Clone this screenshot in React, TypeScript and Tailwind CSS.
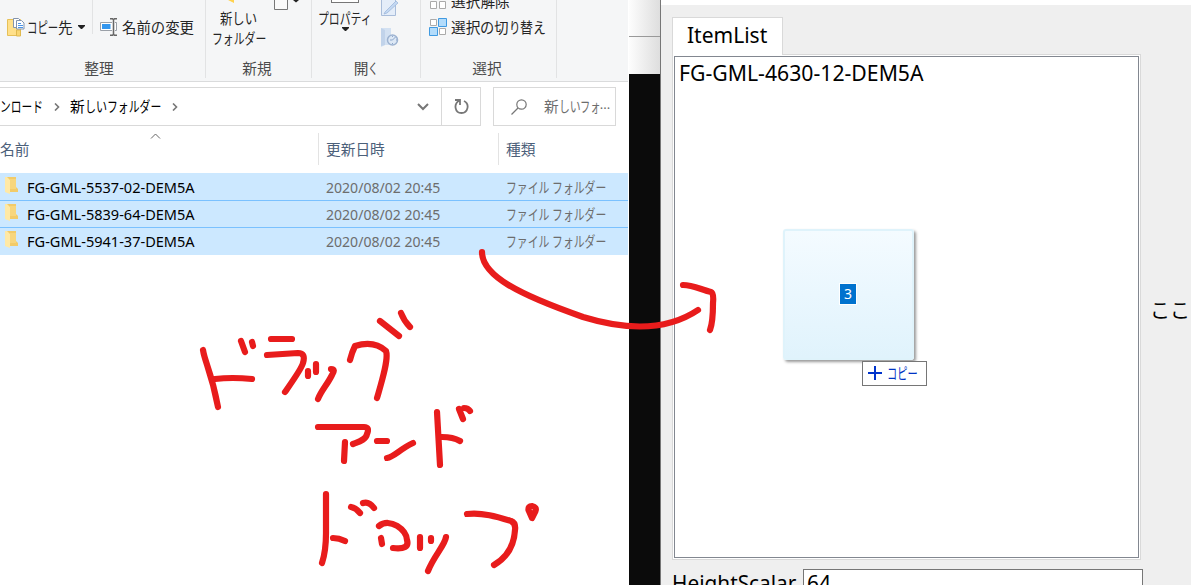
import React from 'react';

const files = ['FG-GML-5537-02-DEM5A', 'FG-GML-5839-64-DEM5A', 'FG-GML-5941-37-DEM5A'];

function Narrow({ box, scale, children }: { box: string; scale: string; children: React.ReactNode }) {
  return (
    <span className={`inline-block shrink-0 ${box}`}>
      <span className={`inline-block origin-left whitespace-nowrap ${scale}`}>{children}</span>
    </span>
  );
}

function Caret({ className = '' }: { className?: string }) {
  return (
    <svg className={`h-1 w-[7px] shrink-0 ${className}`} viewBox="0 0 7 4">
      <path d="M0 0h7v1L4 4H3L0 1z" fill="#222" />
    </svg>
  );
}

function CopyToIcon() {
  return (
    <svg className="h-5 w-[18px] shrink-0" viewBox="0 0 18 20">
      <path d="M.5 2.5h13v16H.5z" fill="#ffe08a" stroke="#e6c058" />
      <path d="M9.500 13h4v6h-4z" fill="#f9d673" stroke="#e0b94e" />
      <path d="M6.500 1.500h5l2 2v7h-7z" fill="#fff" stroke="#8394ad" />
      <path d="M9.500 3.500h5l2.500 2.500v6h-7.500z" fill="#fff" stroke="#8394ad" />
      <path d="M11 6.500h3M11 8.500h5M11 10.500h5" stroke="#4c93e6" />
    </svg>
  );
}

function RenameIcon() {
  return (
    <svg className="h-[18px] w-[18px] shrink-0" viewBox="0 0 18 18">
      <path d="M12 4.500H.5v8H12M15 4.500h1.500v8H15" fill="#fff" stroke="#9aa0a8" />
      <path d="M2 6h8.500v5H2z" fill="#3396ee" />
      <path d="M10 .75h2.500l1 1 1-1H17M10 17.250h2.500l1-1 1 1H17M13.500 1.500v15" stroke="#666" strokeWidth="1.500" fill="none" />
    </svg>
  );
}

function EditIcon() {
  return (
    <svg className="h-4 w-[18px]" viewBox="0 0 18 16">
      <path d="M.5 0v15.500h14V0" fill="#e4edf9" stroke="#a9bdda" />
      <path d="M4 12 15 1l2 2L6 13l-3 1z" fill="#c3d8f2" stroke="#98b3d8" strokeWidth=".7" />
    </svg>
  );
}

function HistoryIcon() {
  return (
    <svg className="h-[19px] w-[18px]" viewBox="0 0 18 19">
      <path d="M0 0h10v17H4L0 19z" fill="#d3e1f2" />
      <path d="M0 0l4 2v15l-4 1z" fill="#c1d3ea" />
      <circle cx="11.500" cy="12" r="5" fill="#dde8f5" stroke="#9db3d1" strokeWidth="1.500" />
      <path d="M11.500 12l3-3M11.500 12H9M11.500 8v1M11.500 15v1M15 12h1" stroke="#8ca6cb" />
    </svg>
  );
}

function InvertIcon() {
  return (
    <svg className="h-[18px] w-[18px] shrink-0" viewBox="0 0 18 18">
      <path d="M1.500 1.500h6v6h-6zM10.500 10.500h6v6h-6z" fill="#fff" stroke="#aaa" />
      <path d="M9.500.5h8v8h-8zM.5 9.500h8v8h-8z" fill="#b3dcfb" stroke="#409ae1" />
    </svg>
  );
}

function Folder() {
  return (
    <svg className="h-[18px] w-[13px] shrink-0" viewBox="0 0 13 18">
      <path d="M1 0h10v10l2 2v3H1z" fill="#f2cb69" />
      <path d="M0 0h2l3 3v14l-5-2z" fill="#ffe9a6" />
      <path d="M5 2h6v10H5z" fill="#f7d67d" />
    </svg>
  );
}

function GroupLabel({ children }: { children: React.ReactNode }) {
  return <div className="flex h-5 items-center justify-center text-[#4c4c4c]">{children}</div>;
}

function Ribbon() {
  return (
    <div className="h-[82px] w-[628px] overflow-hidden border-b border-[#dadbdc] bg-[#f5f6f7] text-[14.700px] leading-5 text-[#252525]">
      <div className="flex h-[78px]">
        <div className="flex w-[206px] flex-col border-r border-[#e2e3e4]">
          <div className="flex h-[59px]">
            <div className="flex h-[34px] w-[93px] items-center border-r border-[#e2e3e4] pt-5 pl-[7px]">
              <CopyToIcon />
              <span className="ml-[2px] flex">
                <Narrow box="w-[31px]" scale="scale-x-[.71]">コピー</Narrow>先
              </span>
              <Caret className="ml-[5px]" />
            </div>
            <div className="flex h-[54px] items-center pl-[7px]">
              <RenameIcon />
              <span className="ml-1 w-[74px] whitespace-nowrap text-[14.400px]">名前の変更</span>
            </div>
          </div>
          <div className="pr-[7px]"><GroupLabel>整理</GroupLabel></div>
        </div>
        <div className="flex w-[106px] flex-col border-r border-[#e2e3e4]">
          <div className="flex h-[8px] justify-end pr-3">
            <svg className="h-[10px] w-[73px] shrink-0" viewBox="0 0 73 10">
              <path d="M2 0h6v3z" fill="#ffd24d" />
              <path d="M48.500-1v10.500h13V-1z" fill="#fafafa" stroke="#777" />
              <path d="M67 0h6l-3 2.500z" fill="#222" />
            </svg>
          </div>
          <div className="flex h-[51px] flex-col pl-[6px]">
            <div className="pl-[8px]"><Narrow box="w-[37px]" scale="scale-x-[.84]">新しい</Narrow></div>
            <Narrow box="w-[55px]" scale="scale-x-[.74]">フォルダー</Narrow>
          </div>
          <div className="pr-[3px]"><GroupLabel>新規</GroupLabel></div>
        </div>
        <div className="flex w-[109px] flex-col border-r border-[#e2e3e4]">
          <div className="flex h-[59px]">
            <div className="flex w-[62px] flex-col items-center pl-1">
              <div className="h-[3px] w-7 border border-t-0 border-[#777] bg-white" />
              <div className="mt-[5px]"><Narrow box="w-[54px]" scale="scale-x-[.74]">プロパティ</Narrow></div>
              <Caret className="-mt-px" />
            </div>
            <div className="flex flex-col gap-3 pl-[7px]">
              <EditIcon />
              <HistoryIcon />
            </div>
          </div>
          <GroupLabel>開<Narrow box="w-[10px]" scale="scale-x-[.7]">く</Narrow></GroupLabel>
        </div>
        <div className="flex w-[136px] flex-col border-r border-[#e2e3e4]">
          <div className="flex h-[59px] flex-col">
            <div className="flex h-[17px] pl-[9px]">
              <svg className="h-[9px] w-[17px]" viewBox="0 0 17 9">
                <path d="M.5 1.500h6v7h-6zM9.500 1.500h6v7h-6z" fill="#fff" stroke="#aaa" />
              </svg>
              <span className="-mt-[9px] ml-[4px]">選択解除</span>
            </div>
            <div className="flex h-5 items-center pl-2">
              <InvertIcon />
              <span className="ml-1 flex whitespace-nowrap">
                選択
                <Narrow box="w-[29px]" scale="scale-x-[.97]">の切</Narrow>
                <Narrow box="w-[11px]" scale="scale-x-[.78]">り</Narrow>
                <Narrow box="w-[26px]" scale="scale-x-[.88]">替え</Narrow>
              </span>
            </div>
          </div>
          <div className="pr-[3px]"><GroupLabel>選択</GroupLabel></div>
        </div>
      </div>
    </div>
  );
}

function Chevron({ className = '' }: { className?: string }) {
  return (
    <svg className={`h-2 w-[6px] ${className}`} viewBox="0 0 6 8">
      <path d="M1 .5 4.500 4 1 7.500" fill="none" stroke="#777" strokeWidth="1.600" />
    </svg>
  );
}

function AddressRow() {
  return (
    <div className="mt-[5px] flex h-[39px] text-[14.700px] text-black">
      <div className="flex w-[481px] border border-l-0 border-[#d9d9d9]">
        <div className="flex w-[441px] items-center">
          <Narrow box="w-[43px]" scale="scale-x-[.73]">ンロード</Narrow>
          <Chevron className="ml-[11px]" />
          <span className="ml-[10px] flex">新<Narrow box="w-[22px]" scale="scale-x-[.75]">しい</Narrow><Narrow box="w-[54px]" scale="scale-x-[.74]">フォルダー</Narrow></span>
          <Chevron className="ml-[11px]" />
          <svg className="mr-3 ml-auto h-2 w-3" viewBox="0 0 12 8">
            <path d="m1 1 5 5 5-5" fill="none" stroke="#777" strokeWidth="2" />
          </svg>
        </div>
        <div className="flex flex-1 items-center justify-center border-l border-[#d9d9d9]">
          <svg className="h-[15px] w-[15px]" viewBox="0 0 15 15">
            <path d="M1 1h5v5M5.500 1.500C-1 5 1 14 7.500 14S16 5 10 2" fill="none" stroke="#777" strokeWidth="1.800" />
          </svg>
        </div>
      </div>
      <div className="ml-3 flex w-[123px] items-center border border-[#d9d9d9] pl-[17px] text-[#6d6d6d]">
        <svg className="h-4 w-4" viewBox="0 0 16 16">
          <circle cx="10.500" cy="5.500" r="4.700" fill="none" stroke="#777" strokeWidth="1.200" />
          <path d="M7 9 .5 15.500" stroke="#777" strokeWidth="1.200" />
        </svg>
        <span className="ml-[17px] flex">新<Narrow box="w-[21px]" scale="scale-x-[.74]">しい</Narrow><Narrow box="w-[20px]" scale="scale-x-[.7]">フォ</Narrow><span className="font-['Noto_Sans'] text-[13px]">...</span></span>
      </div>
    </div>
  );
}

function FileTable() {
  return (
    <div className="w-[628px]">
      <div className="relative flex h-[47px] pt-[7px] text-[14.700px] text-[#4c607a]">
        <div className="h-8 w-[319px] border-r border-[#e3e3e3] leading-8">名前</div>
        <div className="h-8 w-[180px] border-r border-[#e3e3e3] pl-[7px] leading-8">更新日時</div>
        <div className="h-8 pl-[7px] leading-8">種類</div>
        <svg className="absolute top-[7px] left-[150px] h-[6px] w-[11px]" viewBox="0 0 11 6">
          <path d="M1 5.500 5.500 1 10 5.500" fill="none" stroke="#666" />
        </svg>
      </div>
      <div className="bg-[#cce8ff] pt-px">
        {files.map((name, i) => (
          <div
            key={name}
            className={`flex h-[27px] items-center font-['Noto_Sans','Noto_Sans_CJK_JP',sans-serif] text-[14.700px] leading-5 whitespace-nowrap ${i < 2 ? 'border-b border-[#7ac1ff]' : 'pb-px'}`}
          >
            <div className="flex w-[326px] items-center gap-[9px] pl-[5px]">
              <div className="-mt-[3px]"><Folder /></div>
              <Narrow box="w-[170px]" scale="scale-x-[.99]"><span className="text-black">{name}</span></Narrow>
            </div>
            <div className="w-[180px] text-[#6d6d6d]"><Narrow box="w-[116px]" scale="scale-x-[.957]">2020/08/02 20:45</Narrow></div>
            <div className="text-[#6d6d6d]"><Narrow box="w-[100px]" scale="scale-x-[.737]">ファイル フォルダー</Narrow></div>
          </div>
        ))}
      </div>
    </div>
  );
}

function DragPreview() {
  return (
    <div className="absolute top-[229px] left-[783px]">
      <div className="flex h-[131px] w-[131px] items-center justify-center rounded-[3px] border-2 border-[#dff3fb] bg-linear-to-b from-[#f4fbff] via-[#eaf7fe] to-[#e0f3fc] shadow-[2px_2px_3px_rgba(0,0,0,0.4)]">
        <div className="-mt-px mr-px flex h-[22px] w-[18px] items-center justify-center border border-white bg-[#0072ce] font-['Noto_Sans',sans-serif] text-sm text-white">3</div>
      </div>
      <div className="mt-px ml-[79px] flex h-[25px] w-[65px] items-center border border-[#767676] bg-white pb-px pl-[5px] text-[15px] leading-5 text-[#0033c4]">
        <svg className="h-[14px] w-[14px]" viewBox="0 0 14 14">
          <path d="M7 0v14M0 7h14" stroke="#0033cc" strokeWidth="2" />
        </svg>
        <span className="ml-[5px] flex"><Narrow box="w-[30px]" scale="scale-x-[.68]">コピー</Narrow></span>
      </div>
    </div>
  );
}

function Annotations() {
  return (
    <svg className="pointer-events-none absolute inset-0 h-[585px] w-[1191px]" viewBox="0 0 1191 585" fill="none" stroke="#e81c1c" strokeWidth="6.200" strokeLinecap="round" strokeLinejoin="round">
      <path d="M482 252C482 276 520 295 583 317Q655 339 698 310M683 285C693 285 702 290 711 292Q714 293 713 303C713 314 713 322 710 330" />
      <path d="M203 350C205 363 211 370 218 407M215 379Q232 377 252 379M241 341L245 352M252 342L253 346M271 339H292M267 355L298 353Q306 353 303 363C302 368 292 382 285 392M308 371V376M316 364V372M331 369Q336 369 332 375C327 385 321 391 318 399M350 360Q352 352 355 346Q374 340 386 351C389 359 381 384 377 398M380 321L399 336M401 313Q404 321 410 327" />
      <path d="M318 427H364Q370 427 367 434C366 440 358 442 353 444M345 442L344 461M377 441H387M387 458C394 457 400 449 413 443M437 412L440 465M442 437Q453 437 460 441M459 409L463 419M464 408Q468 408 470 411" />
      <path d="M326 494V533Q326 551 322 563M333 538Q339 538 345 541M351 507Q356 508 360 513M363 503Q369 501 374 508M381 538L382 544M379 526C390 517 407 530 407 540Q410 550 393 548M420 537V548M431 538V541M446 537C445 545 434 556 428 571M467 514C482 512 498 517 511 521Q516 523 515 530C514 547 506 558 494 565" />
      <path d="M528.500 510Q528 506 532 506Q537 507 535.500 511L532 518Z" />
    </svg>
  );
}

function ToolWindow() {
  return (
    <div className="flex w-[531px] flex-col border-l border-[#777] bg-[#efefef] font-['Noto_Sans',sans-serif] text-black">
      <div className="h-[5px] shrink-0 bg-white" />
      <div className="flex pt-3 pl-[11px]">
        <div className="flex flex-col">
          <div className="z-10 -mb-px h-[38px] w-[111px] border border-b-0 border-[#d9d9d9] bg-white pl-[14px] text-[21px] leading-[34px]">
            <Narrow box="w-[82px]" scale="scale-x-100">ItemList</Narrow>
          </div>
          <div className="h-[506px] w-[469px] shrink-0 border border-[#d9d9d9] bg-white p-px">
            <div className="h-[502px] border border-[#828790] bg-white pl-1 text-[21px] leading-8">
              <Narrow box="w-[246px]" scale="scale-x-[1.01]">FG-GML-4630-12-DEM5A</Narrow>
            </div>
          </div>
          <div className="mt-[9px] flex h-8 w-[471px] justify-between text-[21px]">
            <span className="leading-[29px]"><Narrow box="w-[124px]" scale="scale-x-[.99]">HeightScalar</Narrow></span>
            <div className="w-[340px] border border-[#767676] bg-white pl-[3px] leading-[27px]">64</div>
          </div>
        </div>
        <div className="pt-[278px] pl-[7px] font-['Noto_Sans_CJK_JP',sans-serif] text-[20px] leading-[30px] whitespace-nowrap">ここ</div>
      </div>
    </div>
  );
}

export default function App() {
  return (
    <div className="relative flex h-[585px] w-[1191px] overflow-hidden bg-white font-['Noto_Sans_CJK_JP',sans-serif]">
      <div className="flex w-[629px] shrink-0 flex-col">
        <Ribbon />
        <AddressRow />
        <FileTable />
      </div>
      <div className="flex w-[31px] shrink-0 flex-col">
        <div className="h-[37px] border-b border-[#999] bg-linear-to-r from-[#fdfdfd] to-[#dedede]" />
        <div className="h-[37px] bg-linear-to-r from-[#fdfdfd] to-[#dedede]" />
        <div className="flex-1 bg-[#0b0b0b]" />
      </div>
      <ToolWindow />
      <DragPreview />
      <Annotations />
    </div>
  );
}
